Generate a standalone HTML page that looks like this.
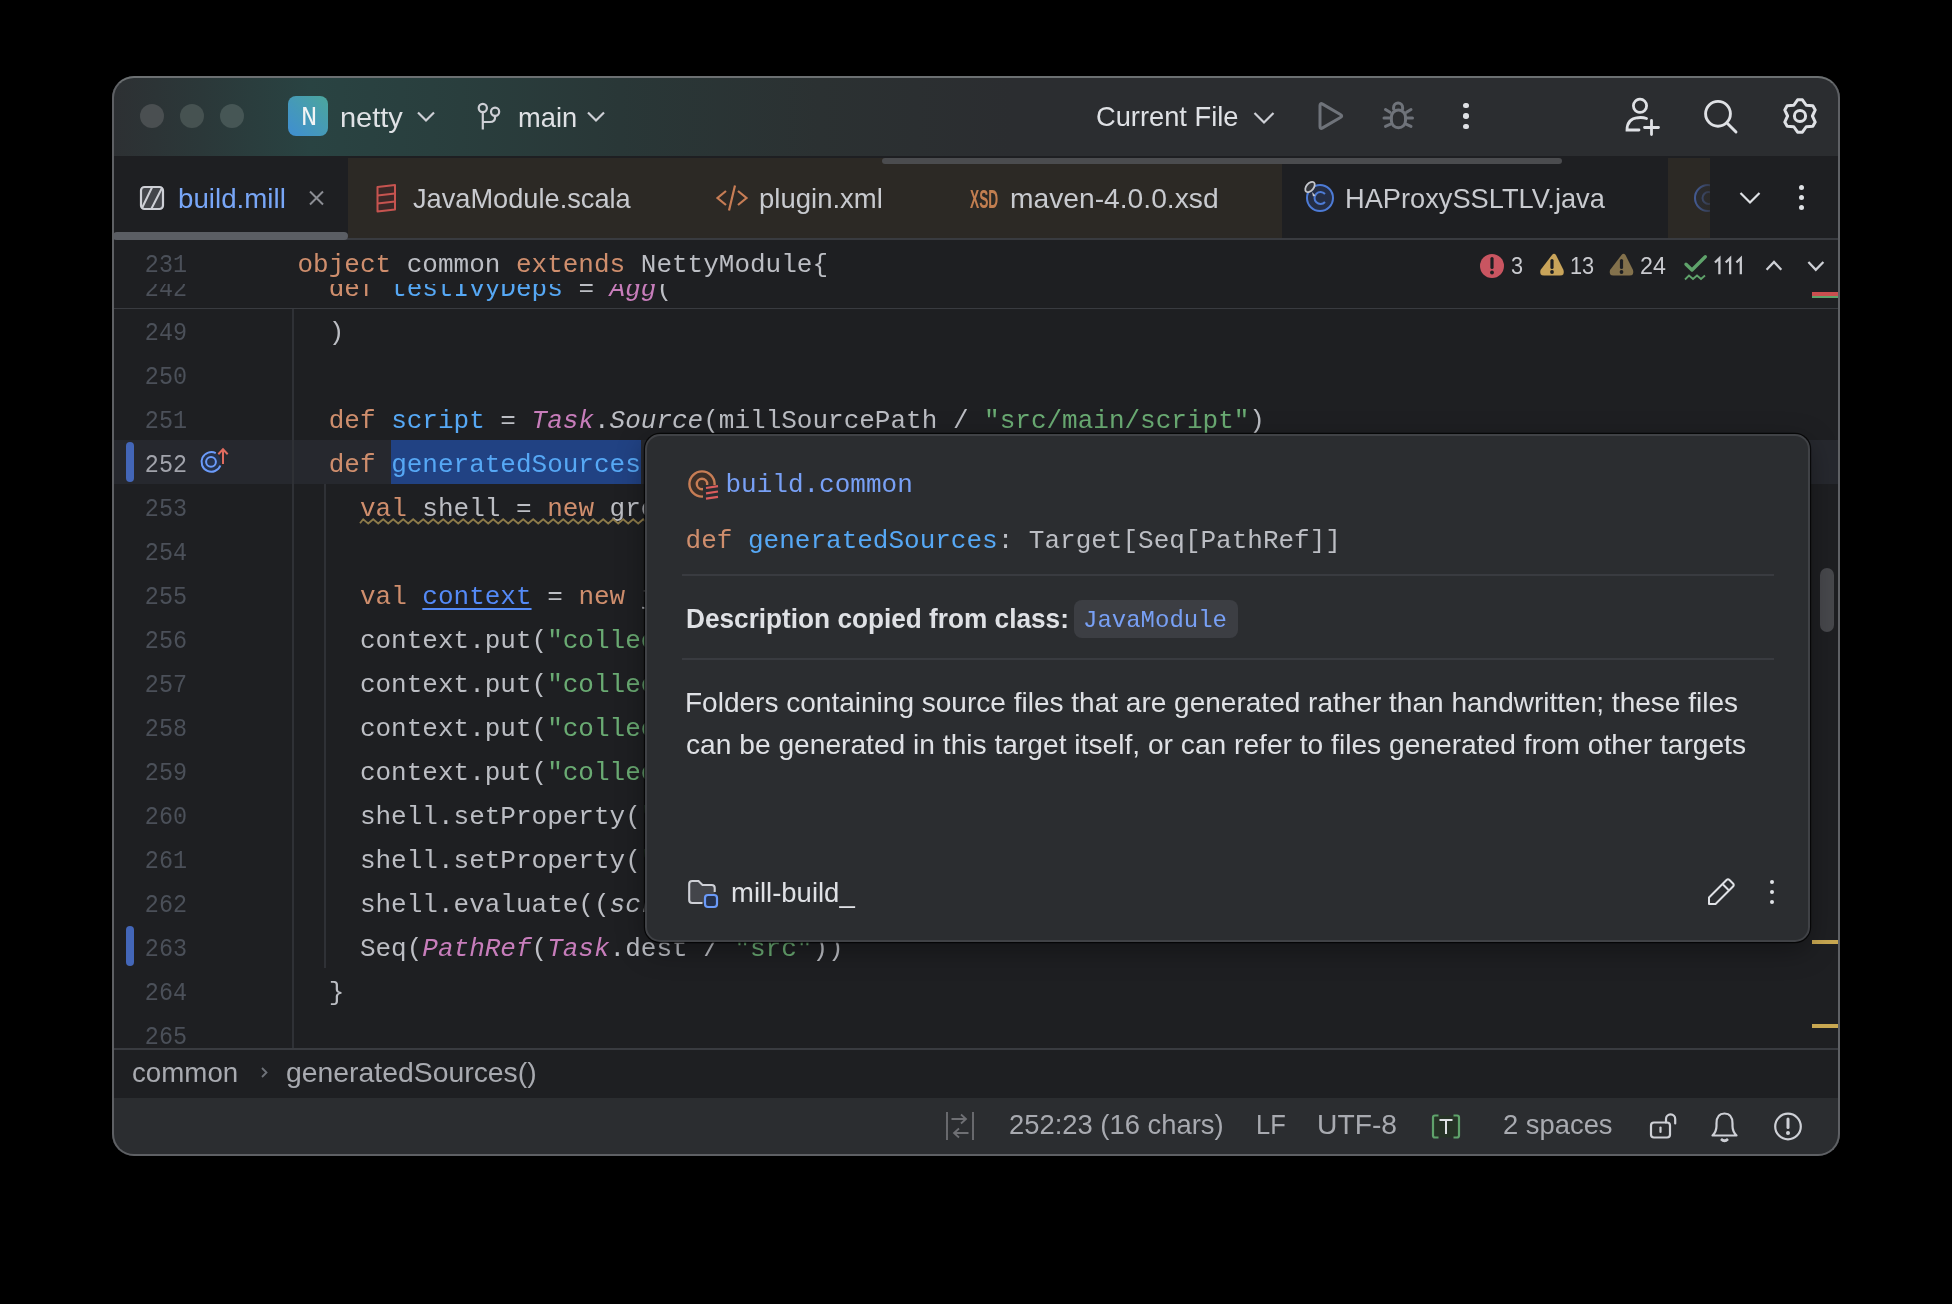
<!DOCTYPE html>
<html><head><meta charset="utf-8">
<style>
*{box-sizing:border-box;margin:0;padding:0}
html,body{width:1952px;height:1304px;background:#000;overflow:hidden}
body{position:relative;font-family:"Liberation Sans",sans-serif}
.a{position:absolute}
.win{will-change:transform;position:absolute;left:0;top:0;width:1952px;height:1304px;clip-path:inset(76px 112px 148px 112px round 22px);background:#1e1f22}
.border{position:absolute;left:112px;top:76px;width:1728px;height:1080px;border-radius:22px;border:2px solid #5e6064;border-top-color:#6c7072;pointer-events:none}
.t{position:absolute;white-space:pre;line-height:1}
.ui{font-family:"Liberation Sans",sans-serif;font-size:27px;color:#dfe1e5}
.code{font-family:"Liberation Mono",monospace;font-size:26px;white-space:pre;position:absolute;line-height:1}
.kw{color:#cf8e6d}.df{color:#bcbec4}.fn{color:#56a8f5}.st{color:#6aab73}.ob{color:#c77dbb;font-style:italic}.it{font-style:italic}
.ln{font-family:"Liberation Mono",monospace;font-size:26px;color:#4b5059;position:absolute;line-height:1;width:60px;text-align:right;left:127px;transform:scaleX(0.9);transform-origin:100% 50%}
svg{position:absolute;overflow:visible}
</style></head><body>
<div class="win">
  <!-- title bar -->
  <div class="a" style="left:112px;top:76px;width:1728px;height:80px;background:#2b2d30"></div>
  <div class="a" style="left:112px;top:76px;width:1728px;height:80px;background:linear-gradient(to right,#2d3033 0px,#2b3839 90px,#294342 198px,#293e3d 350px,#293737 508px,#2b3132 708px,#2b2d30 900px)"></div>
  
  <!-- traffic lights -->
  <div class="a" style="left:140px;top:104px;width:24px;height:24px;border-radius:50%;background:#4a4f51"></div>
  <div class="a" style="left:180px;top:104px;width:24px;height:24px;border-radius:50%;background:#465251"></div>
  <div class="a" style="left:220px;top:104px;width:24px;height:24px;border-radius:50%;background:#465655"></div>
  <!-- project badge -->
  <div class="a" style="left:288px;top:96px;width:40px;height:40px;border-radius:8px;background:linear-gradient(45deg,#3f8ed2 0%,#4ca69c 100%)"></div>
  <div class="t" style="left:301px;top:105px;font-family:'Liberation Mono',monospace;font-size:27px;color:#f2f4f5">N</div>
  <div class="t" style="left:339.96px;top:103.50px;font-size:28px;color:#dfe1e5;transform:scaleX(1.0351);transform-origin:0 0">netty</div>
  <svg style="left:0;top:0" width="1" height="1"><polyline points="418,112.5 426,120.5 434,112.5" fill="none" stroke="#ced0d6" stroke-width="2.2"/></svg>
  <!-- branch icon -->
  <svg style="left:0;top:0" width="1" height="1" fill="none" stroke="#ced0d6" stroke-width="2.2">
    <circle cx="482.8" cy="108" r="4.1"/><circle cx="495.1" cy="111.8" r="4.1"/>
    <path d="M482.8,112.1 V129.5 M482.8,122 H490 Q495.1,122 495.1,117 V115.9"/>
  </svg>
  <div class="t" style="left:518.03px;top:103.50px;font-size:28px;color:#dfe1e5;transform:scaleX(0.9739);transform-origin:0 0">main</div>
  <svg style="left:0;top:0" width="1" height="1"><polyline points="588,112.5 596,120.5 604,112.5" fill="none" stroke="#ced0d6" stroke-width="2.2"/></svg>
  <div class="t" style="left:1096.13px;top:103.30px;font-size:28px;color:#dfe1e5;transform:scaleX(0.9738);transform-origin:0 0">Current File</div>
  <svg style="left:0;top:0" width="1" height="1"><polyline points="1254.5,113 1264,122.5 1273.5,113" fill="none" stroke="#ced0d6" stroke-width="2.2"/></svg>
  <!-- play -->
  <svg style="left:0;top:0" width="1" height="1"><path d="M1322.59,104.11 L1340.41,114.49 Q1343.00,116.00 1340.41,117.51 L1322.59,127.89 Q1320.00,129.40 1320.00,126.40 L1320.00,105.60 Q1320.00,102.60 1322.59,104.11 Z" fill="none" stroke="#6f737a" stroke-width="3" stroke-linejoin="round"/></svg>
  <!-- bug -->
  <svg style="left:0;top:0" width="1" height="1" fill="none" stroke="#6f737a" stroke-width="3" stroke-linecap="round">
    <path d="M1393.6,109 V107.6 A4.5,4.5 0 0 1 1402.6,107.6 V109"/>
    <rect x="1391.4" y="110.1" width="14.1" height="17.7" rx="7"/>
    <path d="M1385.5,109.5 L1390,112.3 M1411,109.5 L1406.5,112.3 M1384,118 H1390 M1412.5,118 H1406.5 M1385.5,126.4 L1390.5,124.2 M1411,126.4 L1406,124.2"/>
  </svg>
  <!-- more dots -->
  <div class="a" style="left:1463.3px;top:102.5px;width:5.4px;height:5.4px;border-radius:50%;background:#dfe1e5"></div>
  <div class="a" style="left:1463.3px;top:113.3px;width:5.4px;height:5.4px;border-radius:50%;background:#dfe1e5"></div>
  <div class="a" style="left:1463.3px;top:124px;width:5.4px;height:5.4px;border-radius:50%;background:#dfe1e5"></div>
  <!-- person add -->
  <svg style="left:0;top:0" width="1" height="1" fill="none" stroke="#dfe1e5" stroke-width="2.8" stroke-linecap="round">
    <circle cx="1640" cy="105.8" r="6.6"/>
    <path d="M1639,130 H1627 Q1627,117.5 1640.5,117.5 Q1644,117.5 1646.5,118.5"/>
    <path d="M1644.5,127.5 H1658.5 M1651.5,120.5 V134.5"/>
  </svg>
  <!-- search -->
  <svg style="left:0;top:0" width="1" height="1" fill="none" stroke="#dfe1e5" stroke-width="2.9" stroke-linecap="round">
    <circle cx="1718" cy="113.8" r="12.4"/>
    <path d="M1727.5,123.5 L1736,132"/>
  </svg>
  <!-- gear -->
  <svg style="left:0;top:0" width="1" height="1" fill="none" stroke="#dfe1e5" stroke-width="3" stroke-linejoin="round">
    <path d="M1797.60,99.80 L1802.40,99.80 L1806.20,105.26 L1812.83,105.82 L1815.23,109.98 L1812.40,116.00 L1815.23,122.02 L1812.83,126.18 L1806.20,126.74 L1802.40,132.20 L1797.60,132.20 L1793.80,126.74 L1787.17,126.18 L1784.77,122.02 L1787.60,116.00 L1784.77,109.98 L1787.17,105.82 L1793.80,105.26 Z"/>
    <circle cx="1800" cy="116" r="5.6"/>
  </svg>

  <!-- tab bar -->
  <div class="a" style="left:112px;top:156px;width:1728px;height:82px;background:#1e1f22"></div>
  <div class="a" style="left:112px;top:238px;width:1728px;height:2px;background:#393b40"></div>

  <!-- tabs -->
  <div class="a" style="left:348px;top:158px;width:934px;height:80px;background:#2c2925"></div>
  <div class="a" style="left:1668px;top:158px;width:42px;height:80px;background:#2c2925"></div>
  <div class="a" style="left:882px;top:158px;width:680px;height:6px;border-radius:3px;background:#4b4c4f"></div>
  <div class="a" style="left:113px;top:232px;width:235px;height:8px;border-radius:4px;background:#5b5e64"></div>
  <!-- build.mill icon -->
  <svg style="left:0;top:0" width="1" height="1">
    <rect x="141" y="187" width="22" height="22" rx="3.5" fill="#43454a" stroke="#ced0d6" stroke-width="2.2"/>
    <path d="M142,208 L152,187.5 M151.5,208.5 L162,188" stroke="#ced0d6" stroke-width="2"/>
  </svg>
  <div class="t" style="left:178.01px;top:184.90px;font-size:28px;color:#78a6f7;transform:scaleX(0.9897);transform-origin:0 0">build.mill</div>
  <svg style="left:0;top:0" width="1" height="1"><path d="M310,191.5 L323,204.5 M323,191.5 L310,204.5" stroke="#8c8e94" stroke-width="2"/></svg>
  <!-- scala icon -->
  <svg style="left:0;top:0" width="1" height="1" fill="#3b2827" stroke="#c75450" stroke-width="2" stroke-linejoin="round">
    <path d="M377.5,187 L395,185 L395,209.5 L377.5,211.5 Z"/>
    <path d="M377.5,195.5 L395,193.5 M377.5,203.5 L395,201.5" fill="none"/>
  </svg>
  <div class="t" style="left:412.90px;top:185.20px;font-size:28px;color:#c8cacf;transform:scaleX(0.9713);transform-origin:0 0">JavaModule.scala</div>
  <!-- xml icon -->
  <svg style="left:0;top:0" width="1" height="1" fill="none" stroke="#c77d55" stroke-width="2.2">
    <path d="M726,191 L717.5,198 L726,205 M738,191 L746.5,198 L738,205 M735,185.5 L729,210.5"/>
  </svg>
  <div class="t" style="left:758.62px;top:185.30px;font-size:28px;color:#c8cacf;transform:scaleX(0.9828);transform-origin:0 0">plugin.xml</div>
  <div class="t" style="left:969.6px;top:186.6px;font-family:'Liberation Sans',sans-serif;font-weight:bold;font-size:25px;color:#c27e50;transform:scaleX(0.55);transform-origin:0 0">XSD</div>
  <div class="t" style="left:1010.29px;top:184.90px;font-size:28px;color:#c8cacf;transform:scaleX(1.0077);transform-origin:0 0">maven-4.0.0.xsd</div>
  <!-- java class icon -->
  <svg style="left:0;top:0" width="1" height="1">
    <circle cx="1320" cy="198" r="13" fill="#252e45" stroke="#4d7bd6" stroke-width="2"/>
    <path d="M1325,194 A6,6 0 1 0 1325,202" fill="none" stroke="#4d7bd6" stroke-width="2"/>
    <ellipse cx="1310" cy="187" rx="6" ry="3.6" transform="rotate(-50 1310 187)" fill="#33353a" stroke="#c4c6cc" stroke-width="1.8"/>
    <path d="M1312,192 L1315.5,195.5 L1313,196.5 Z" fill="#c4c6cc"/>
  </svg>
  <div class="t" style="left:1345.25px;top:184.90px;font-size:28px;color:#c8cacf;transform:scaleX(0.9726);transform-origin:0 0">HAProxySSLTLV.java</div>
  <svg style="left:0;top:0" width="1" height="1">
    <defs><clipPath id="cp1"><rect x="1668" y="158" width="42" height="80"/></clipPath></defs>
    <g clip-path="url(#cp1)">
    <circle cx="1708" cy="198" r="13" fill="#2a2d35" stroke="#4d6fc0" stroke-width="2"/>
    <path d="M1713,194 A6,6 0 1 0 1713,202" fill="none" stroke="#4a66a8" stroke-width="2"/>
    </g>
  </svg>
  <div class="a" style="left:1690px;top:158px;width:20px;height:80px;background:linear-gradient(to right,rgba(44,41,37,0.15),rgba(44,41,37,0.75))"></div>
  <svg style="left:0;top:0" width="1" height="1"><polyline points="1740.5,193 1750,202.5 1759.5,193" fill="none" stroke="#dfe1e5" stroke-width="2.2"/></svg>
  <div class="a" style="left:1799.3px;top:185.3px;width:5.2px;height:5.2px;border-radius:50%;background:#dfe1e5"></div>
  <div class="a" style="left:1799.3px;top:195.3px;width:5.2px;height:5.2px;border-radius:50%;background:#dfe1e5"></div>
  <div class="a" style="left:1799.3px;top:205.3px;width:5.2px;height:5.2px;border-radius:50%;background:#dfe1e5"></div>

  <!-- editor -->
  <div class="a" style="left:112px;top:240px;width:1728px;height:808px;background:#1e1f22"></div>
  <!-- editor content -->
  <div class="a" style="left:112px;top:440px;width:1728px;height:44px;background:#26282e"></div>
  <div class="a" style="left:391px;top:440px;width:250px;height:44px;background:#214283"></div>
  <div class="a" style="left:292px;top:309px;width:2px;height:739px;background:#2f3136"></div>
  <div class="a" style="left:324px;top:484px;width:2px;height:484px;background:#2f3136"></div>
  <div class="a" style="left:126px;top:442px;width:8px;height:40px;border-radius:4px;background:#4366b8"></div>
  <div class="a" style="left:126px;top:926px;width:8px;height:40px;border-radius:4px;background:#4366b8"></div>
  <div class="ln" style="top:320.07px">249</div>
  <div class="code df" style="left:297.5px;top:320.07px">  )</div>
  <div class="ln" style="top:364.07px">250</div>
  <div class="code df" style="left:297.5px;top:364.07px"></div>
  <div class="ln" style="top:408.07px">251</div>
  <div class="code df" style="left:297.5px;top:408.07px">  <span class="kw">def</span> <span class="fn">script</span> = <span class="ob">Task</span>.<span class="it">Source</span>(millSourcePath / <span class="st">"src/main/script"</span>)</div>
  <div class="ln" style="top:452.07px;color:#a1a3ab">252</div>
  <div class="code df" style="left:297.5px;top:452.07px">  <span class="kw">def</span> <span class="fn">generatedSources</span>: T[Seq[PathRef]] = T {</div>
  <div class="ln" style="top:496.07px">253</div>
  <div class="code df" style="left:297.5px;top:496.07px">    <span class="kw">val</span> shell = <span class="kw">new</span> groovy.lang.GroovyShell()</div>
  <div class="ln" style="top:540.07px">254</div>
  <div class="code df" style="left:297.5px;top:540.07px"></div>
  <div class="ln" style="top:584.07px">255</div>
  <div class="code df" style="left:297.5px;top:584.07px">    <span class="kw">val</span> <span style="color:#548af7;text-decoration:underline;text-decoration-thickness:2px;text-underline-offset:4px">context</span> = <span class="kw">new</span> java.util.HashMap[String, Object]()</div>
  <div class="ln" style="top:628.07px">256</div>
  <div class="code df" style="left:297.5px;top:628.07px">    context.put(<span class="st">"collection"</span>, collection)</div>
  <div class="ln" style="top:672.07px">257</div>
  <div class="code df" style="left:297.5px;top:672.07px">    context.put(<span class="st">"collectionType"</span>, collectionType)</div>
  <div class="ln" style="top:716.07px">258</div>
  <div class="code df" style="left:297.5px;top:716.07px">    context.put(<span class="st">"collectionName"</span>, collectionName)</div>
  <div class="ln" style="top:760.07px">259</div>
  <div class="code df" style="left:297.5px;top:760.07px">    context.put(<span class="st">"collectionDir"</span>, collectionDir)</div>
  <div class="ln" style="top:804.07px">260</div>
  <div class="code df" style="left:297.5px;top:804.07px">    shell.setProperty(<span class="st">"properties"</span>, context)</div>
  <div class="ln" style="top:848.07px">261</div>
  <div class="code df" style="left:297.5px;top:848.07px">    shell.setProperty(<span class="st">"project"</span>, context)</div>
  <div class="ln" style="top:892.07px">262</div>
  <div class="code df" style="left:297.5px;top:892.07px">    shell.evaluate((<span class="it">script</span>().path / <span class="st">"codegen.groovy"</span>).toIO)</div>
  <div class="ln" style="top:936.07px">263</div>
  <div class="code df" style="left:297.5px;top:936.07px">    Seq(<span class="ob">PathRef</span>(<span class="ob">Task</span>.dest / <span class="st">"src"</span>))</div>
  <div class="ln" style="top:980.07px">264</div>
  <div class="code df" style="left:297.5px;top:980.07px">  }</div>
  <div class="ln" style="top:1024.07px">265</div>
  <div class="code df" style="left:297.5px;top:1024.07px"></div>
  <svg style="left:0;top:0" width="1" height="1"><path d="M360,523.2 L363.2,519.3 L368.2,523.5 L373.2,519.3 L378.2,523.5 L383.2,519.3 L388.2,523.5 L393.2,519.3 L398.2,523.5 L403.2,519.3 L408.2,523.5 L413.2,519.3 L418.2,523.5 L423.2,519.3 L428.2,523.5 L433.2,519.3 L438.2,523.5 L443.2,519.3 L448.2,523.5 L453.2,519.3 L458.2,523.5 L463.2,519.3 L468.2,523.5 L473.2,519.3 L478.2,523.5 L483.2,519.3 L488.2,523.5 L493.2,519.3 L498.2,523.5 L503.2,519.3 L508.2,523.5 L513.2,519.3 L518.2,523.5 L523.2,519.3 L528.2,523.5 L533.2,519.3 L538.2,523.5 L543.2,519.3 L548.2,523.5 L553.2,519.3 L558.2,523.5 L563.2,519.3 L568.2,523.5 L573.2,519.3 L578.2,523.5 L583.2,519.3 L588.2,523.5 L593.2,519.3 L598.2,523.5 L603.2,519.3 L608.2,523.5 L613.2,519.3 L618.2,523.5 L623.2,519.3 L628.2,523.5 L633.2,519.3 L638.2,523.5 L643.2,519.3 L648.2,523.5 L653.2,519.3 L658.2,523.5 L663.2,519.3 L668.2,523.5 L673.2,519.3 L678.2,523.5 L683.2,519.3 L688.2,523.5 L693.2,519.3 L698.2,523.5 L703.2,519.3 L708.2,523.5 L713.2,519.3 L718.2,523.5 L723.2,519.3 L728.2,523.5 L733.2,519.3 L738.2,523.5 L743.2,519.3 L748.2,523.5 L753.2,519.3 L758.2,523.5 L763.2,519.3 L768.2,523.5 L773.2,519.3 L778.2,523.5 L783.2,519.3 L788.2,523.5 L793.2,519.3 L798.2,523.5 L803.2,519.3 L808.2,523.5 L813.2,519.3 L818.2,523.5 L823.2,519.3 L828.2,523.5 L833.2,519.3 L838.2,523.5 L843.2,519.3 L848.2,523.5 L853.2,519.3 L858.2,523.5 L863.2,519.3 L868.2,523.5 L873.2,519.3 L878.2,523.5 L883.2,519.3 L888.2,523.5 L893.2,519.3 L898.2,523.5 L903.2,519.3 L908.2,523.5 L913.2,519.3 L918.2,523.5 L923.2,519.3 L928.2,523.5 L933.2,519.3 L938.2,523.5 L943.2,519.3 L948.2,523.5 L953.2,519.3 L958.2,523.5 L963.2,519.3 L968.2,523.5 L973.2,519.3 L978.2,523.5 L983.2,519.3 L988.2,523.5 L993.2,519.3 L998.2,523.5" fill="none" stroke="#8d7b4a" stroke-width="1.8" stroke-linejoin="miter"/></svg>
  <svg style="left:0;top:0" width="1" height="1">
    <circle cx="211" cy="461.8" r="9.8" fill="#25324d"/>
    <path d="M215.8,453.2 A9.8,9.8 0 1 0 220.4,465.5" fill="none" stroke="#6b9bfa" stroke-width="2"/>
    <circle cx="211" cy="461.8" r="4.9" fill="none" stroke="#6b9bfa" stroke-width="2"/>
    <path d="M223,464 V450 M218.3,454.2 L223,449.3 L227.7,454.2" fill="none" stroke="#e06c5f" stroke-width="2"/>
  </svg>
  <div class="a" style="left:112px;top:240px;width:1728px;height:68px;background:#1e1f22"></div>
  <div class="ln" style="top:252.47px">231</div>
  <div class="code df" style="left:297.5px;top:252.47px"><span class="kw">object</span> common <span class="kw">extends</span> NettyModule{</div>
  <div class="a" style="left:112px;top:284px;width:1728px;height:24px;overflow:hidden">
    <div class="ln" style="top:-7.93px;left:15px">242</div>
    <div class="code df" style="left:185.5px;top:-7.93px">  <span class="kw">def</span> <span class="fn">testIvyDeps</span> = <span class="ob">Agg</span>(</div>
  </div>
  <div class="a" style="left:112px;top:308px;width:1728px;height:1px;background:#393b40"></div>



  <!-- inspection widget -->
  <svg style="left:0;top:0" width="1" height="1">
    <circle cx="1492" cy="266" r="12" fill="#c95561"/>
    <path d="M1492,258.5 V267.5" stroke="#1e1f22" stroke-width="3.2" stroke-linecap="round"/>
    <circle cx="1492" cy="272.5" r="1.9" fill="#1e1f22"/>
    <path d="M1552,255 Q1554,252.5 1556,255 L1563.5,270 Q1565,275.5 1560,275.5 H1544 Q1539,275.5 1540.5,270 Z" fill="#c9a45a"/>
    <path d="M1552,260.5 V267.5" stroke="#1e1f22" stroke-width="3.2" stroke-linecap="round"/>
    <circle cx="1552" cy="272" r="1.9" fill="#1e1f22"/>
    <path d="M1622,255 Q1624,252.5 1626,255 L1633.5,270 Q1635,275.5 1630,275.5 H1614 Q1609,275.5 1610.5,270 Z" transform="translate(-0.5,0)" fill="#83714c"/>
    <path d="M1621.5,260.5 V267.5" stroke="#1e1f22" stroke-width="3.2" stroke-linecap="round"/>
    <circle cx="1621.5" cy="272" r="1.9" fill="#1e1f22"/>
    <path d="M1686,264.2 L1692,270 L1705.3,256.8" fill="none" stroke="#5fa36b" stroke-width="3.4" stroke-linecap="round" stroke-linejoin="round"/>
    <path d="M1685,279.5 L1689,275.5 L1693,279 L1697,275.5 L1701,279 L1705,275.5" fill="none" stroke="#5fa36b" stroke-width="1.8"/>
    <polyline points="1766.6,269.7 1774,262 1781.3,269.7" fill="none" stroke="#ced0d6" stroke-width="2.3"/>
    <polyline points="1808.4,262 1815.8,269.8 1823.4,262" fill="none" stroke="#ced0d6" stroke-width="2.3"/>
  </svg>
  <div class="t" style="left:1511.30px;top:255.03px;font-size:23px;color:#c9cacf;transform:scaleX(0.9417);transform-origin:0 0">3</div>
  <div class="t" style="left:1569.85px;top:255.03px;font-size:23px;color:#c9cacf;transform:scaleX(0.9457);transform-origin:0 0">13</div>
  <div class="t" style="left:1639.99px;top:255.03px;font-size:23px;color:#c9cacf;transform:scaleX(1.0084);transform-origin:0 0">24</div>
  <svg style="left:0;top:0" width="1" height="1" fill="none" stroke="#c9cacf" stroke-width="2.3">
    <path d="M1719.4,274.2 V258.2 L1715,262.5 M1730.1,274.2 V258.2 L1725.7,262.5 M1740.8,274.2 V258.2 L1736.4,262.5"/>
  </svg>
  <!-- right markers -->
  <div class="a" style="left:1812px;top:292px;width:27px;height:4px;background:#c94f4f"></div>
  <div class="a" style="left:1812px;top:296px;width:27px;height:2px;background:#5fa36b"></div>
  <div class="a" style="left:1812px;top:940px;width:27px;height:4px;background:#c8a751"></div>
  <div class="a" style="left:1812px;top:1024px;width:27px;height:4px;background:#c8a751"></div>
  <div class="a" style="left:1820px;top:568px;width:14px;height:64px;border-radius:7px;background:#47484c"></div>

  <!-- popup -->
  <div class="a" style="left:645px;top:434px;width:1165px;height:508px;border-radius:15px;background:#2b2d30;border:2px solid #404246;box-shadow:0 0 0 1.2px rgba(0,0,0,0.75),0 8px 28px rgba(0,0,0,0.35)"></div>
  <svg style="left:0;top:0" width="1" height="1">
    <circle cx="702" cy="484" r="12.6" fill="#3b2f28" stroke="#c77d55" stroke-width="2.4"/>
    <circle cx="702" cy="484" r="5.2" fill="none" stroke="#c77d55" stroke-width="2.4"/>
    <rect x="703" y="485" width="17" height="15" fill="#2b2d30"/>
    <path d="M706,488 L718,486.2 M706,493.3 L718,491.5 M706,498.6 L718,496.8" stroke="#db5c5c" stroke-width="2.2"/>
  </svg>
  <div class="code" style="left:725.5px;top:471.57px;color:#78a0f5">build.common</div>
  <div class="code df" style="left:685.6px;top:527.67px"><span class="kw">def</span> <span class="fn">generatedSources</span>: Target[Seq[PathRef]]</div>
  <div class="a" style="left:682px;top:574px;width:1092px;height:2px;background:#393b40"></div>
  <div class="t" style="left:686.06px;top:605.20px;font-size:28px;font-weight:bold;color:#dfe1e5;transform:scaleX(0.9357);transform-origin:0 0">Description copied from class:</div>
  <div class="a" style="left:1074px;top:600px;width:164px;height:38px;border-radius:8px;background:#3c3e43"></div>
  <div class="code" style="left:1083px;top:609.30px;font-size:24px;color:#78a0f5">JavaModule</div>
  <div class="a" style="left:682px;top:658px;width:1092px;height:2px;background:#393b40"></div>
  <div class="t" style="left:685.00px;top:689.10px;font-size:28px;color:#dfe1e5;transform:scaleX(1.0008);transform-origin:0 0">Folders containing source files that are generated rather than handwritten; these files</div>
  <div class="t" style="left:685.99px;top:730.70px;font-size:28px;color:#dfe1e5;transform:scaleX(1.0060);transform-origin:0 0">can be generated in this target itself, or can refer to files generated from other targets</div>
  <!-- footer -->
  <svg style="left:0;top:0" width="1" height="1">
    <path d="M689.2,884 Q689.2,881 692.2,881 H698.5 L702.5,885 H711.7 Q714.7,885 714.7,888 V900 Q714.7,903 711.7,903 H692.2 Q689.2,903 689.2,900 Z" fill="#43454a"/>
    <path d="M702.5,903 H692.2 Q689.2,903 689.2,900 V884 Q689.2,881 692.2,881 H698.5 L702.5,885 H711.7 Q714.7,885 714.7,888 V892" fill="none" stroke="#ced0d6" stroke-width="2.1"/>
    <rect x="705" y="895" width="12" height="12" rx="3" fill="#25324d" stroke="#6b9bfa" stroke-width="2.2"/>
  </svg>
  <div class="t" style="left:730.62px;top:879.30px;font-size:28px;color:#dfe1e5;transform:scaleX(0.9811);transform-origin:0 0">mill-build_</div>
  <svg style="left:0;top:0" width="1" height="1" fill="none" stroke="#dfe1e5" stroke-width="2" stroke-linejoin="round">
    <path d="M1709,897.5 L1726.5,880 Q1728,878.5 1729.5,880 L1733,883.5 Q1734.5,885 1733,886.5 L1715.5,904 L1709,904 Z M1722.5,884 L1729,890.5"/>
  </svg>
  <div class="a" style="left:1769.7px;top:879.7px;width:4.6px;height:4.6px;border-radius:50%;background:#dfe1e5"></div>
  <div class="a" style="left:1769.7px;top:889.7px;width:4.6px;height:4.6px;border-radius:50%;background:#dfe1e5"></div>
  <div class="a" style="left:1769.7px;top:899.7px;width:4.6px;height:4.6px;border-radius:50%;background:#dfe1e5"></div>

  <!-- breadcrumbs -->
  <div class="a" style="left:112px;top:1048px;width:1728px;height:2px;background:#393b40"></div>
  <div class="a" style="left:112px;top:1050px;width:1728px;height:48px;background:#1e1f22"></div>
  <!-- status bar -->
  <div class="a" style="left:112px;top:1098px;width:1728px;height:58px;background:#2b2d30"></div>
  <div class="t" style="left:131.61px;top:1058.80px;font-size:28px;color:#a8aab0;transform:scaleX(0.9896);transform-origin:0 0">common</div>
  <svg style="left:0;top:0" width="1" height="1"><polyline points="262,1068 266.5,1072.5 262,1077" fill="none" stroke="#6f737a" stroke-width="1.8"/></svg>
  <div class="t" style="left:285.99px;top:1058.80px;font-size:28px;color:#a8aab0;transform:scaleX(1.0128);transform-origin:0 0">generatedSources()</div>

  <svg style="left:0;top:0" width="1" height="1" fill="none" stroke="#6f7074" stroke-width="1.8">
    <path d="M947,1112 V1140 M973,1112 V1140 M951.5,1119 H966 M961,1114.5 L966,1119 L961,1123.5 M968.5,1133 H954 M959,1128.5 L954,1133 L959,1137.5"/>
  </svg>
  <div class="t" style="left:1008.62px;top:1111.30px;font-size:28px;color:#a8aab0;transform:scaleX(0.9777);transform-origin:0 0">252:23 (16 chars)</div>
  <div class="t" style="left:1255.68px;top:1111.30px;font-size:28px;color:#a8aab0;transform:scaleX(0.9096);transform-origin:0 0">LF</div>
  <div class="t" style="left:1316.68px;top:1111.30px;font-size:28px;color:#a8aab0;transform:scaleX(1.0084);transform-origin:0 0">UTF-8</div>
  <svg style="left:0;top:0" width="1" height="1">
    <rect x="1433" y="1115.5" width="26" height="22" fill="#263326"/>
    <path d="M1438.5,1115.5 H1435 Q1433,1115.5 1433,1117.5 V1135.5 Q1433,1137.5 1435,1137.5 H1438.5 M1453.5,1115.5 H1457 Q1459,1115.5 1459,1117.5 V1135.5 Q1459,1137.5 1457,1137.5 H1453.5" fill="none" stroke="#5fa36b" stroke-width="2.2"/>
    <path d="M1439.5,1120 H1452.5 M1446,1120 V1134" stroke="#dfe1e5" stroke-width="2"/>
  </svg>
  <div class="t" style="left:1502.72px;top:1111.30px;font-size:28px;color:#a8aab0;transform:scaleX(0.9776);transform-origin:0 0">2 spaces</div>
  <svg style="left:0;top:0" width="1" height="1" fill="none" stroke="#ced0d6" stroke-width="2.2">
    <rect x="1651" y="1122.5" width="19" height="15" rx="3"/>
    <path d="M1660.5,1127.5 V1132" stroke-linecap="round"/>
    <path d="M1666,1122.5 V1119 A4.6,4.6 0 0 1 1675.2,1119 V1123.5" stroke-linecap="round"/>
    <path d="M1712.5,1135.5 H1736.5 Q1732.5,1131.5 1732.5,1126 V1123.5 Q1732.5,1113.5 1724.5,1113.5 Q1716.5,1113.5 1716.5,1123.5 V1126 Q1716.5,1131.5 1712.5,1135.5 Z" stroke-linejoin="round"/>
    <path d="M1721,1139 Q1724.5,1142.5 1728,1139" stroke-width="2.6"/>
    <circle cx="1788" cy="1126.5" r="12.8"/>
    <path d="M1788,1119 V1127.5" stroke-width="3" stroke-linecap="round"/>
  </svg>
  <div class="a" style="left:1786.1px;top:1131.2px;width:3.8px;height:3.8px;border-radius:50%;background:#ced0d6"></div>

</div>
<div class="border"></div>
</body></html>
